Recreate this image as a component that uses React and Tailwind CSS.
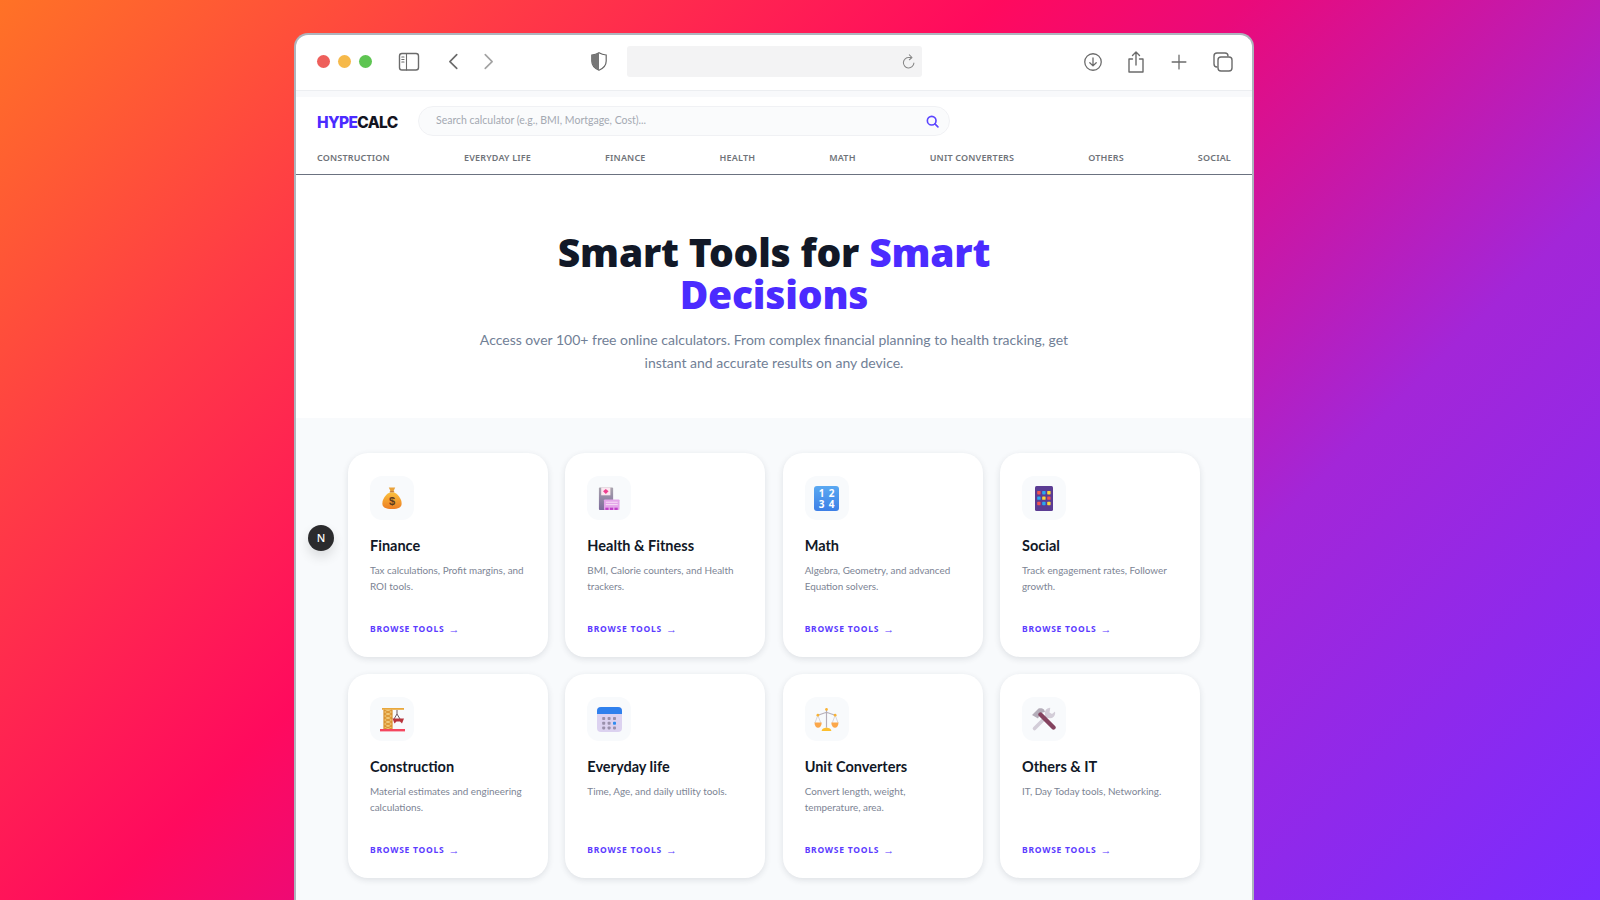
import React from "react";

const ToolIcon = ({ children, className = "" }) => (
  <svg viewBox="0 0 24 24" fill="none" stroke="#6b6b6b" strokeWidth="1.4" strokeLinecap="round" strokeLinejoin="round" className={className}>
    {children}
  </svg>
);

const Bag = () => (
  <svg viewBox="0 0 24 26" className="w-[22px] h-[26px]">
    <defs>
      <linearGradient id="bagG" x1="0" y1="0" x2="0" y2="1">
        <stop offset="0" stopColor="#fbbf3c" />
        <stop offset="1" stopColor="#ec7f25" />
      </linearGradient>
    </defs>
    <path d="M8.5 1.5 L15.5 1.5 L13.5 6 L10.5 6 Z" fill="#e9a23b" />
    <rect x="9.5" y="5.5" width="5" height="1.6" rx=".8" fill="#b9651f" />
    <path d="M9.5 7 C4 10 1.5 15 1.5 19 C1.5 23.5 5 25 12 25 C19 25 22.5 23.5 22.5 19 C22.5 15 20 10 14.5 7 Z" fill="url(#bagG)" />
    <text x="12" y="21" textAnchor="middle" fontSize="12" fontWeight="700" fill="#5c3a1e" fontFamily="Liberation Sans, sans-serif">$</text>
  </svg>
);

const Health = () => (
  <svg viewBox="0 0 24 26" className="w-[22px] h-[25px]">
    <defs>
      <linearGradient id="hG" x1="0" y1="0" x2="0" y2="1">
        <stop offset="0" stopColor="#a9a4ad" />
        <stop offset="1" stopColor="#7c6a9c" />
      </linearGradient>
    </defs>
    <rect x="1" y="1" width="15.5" height="24.5" rx="1" fill="url(#hG)" />
    <rect x="3.5" y="1" width="10" height="8.5" fill="#fbe7f0" />
    <path d="M8.5 2.5 L11.5 5.2 L8.5 8 L5.5 5.2 Z" fill="#ee3e8f" />
    <rect x="6.5" y="14" width="17" height="11.5" rx="1" fill="#e4a6ea" />
    <rect x="8.5" y="16.5" width="13" height="1.2" fill="#f5d8f5" />
    <rect x="8.5" y="19" width="13" height="1.2" fill="#f5d8f5" />
    <rect x="8" y="23" width="3.5" height="2.5" fill="#c03fc8" />
    <rect x="13" y="23" width="3.5" height="2.5" fill="#c03fc8" />
    <rect x="18" y="23" width="3.5" height="2.5" fill="#c03fc8" />
  </svg>
);

const MathIcon = () => (
  <svg viewBox="0 0 25 25" className="w-[25px] h-[25px]">
    <defs>
      <linearGradient id="mG" x1="0" y1="0" x2="0" y2="1">
        <stop offset="0" stopColor="#5aa9f2" />
        <stop offset="1" stopColor="#3d7fe6" />
      </linearGradient>
    </defs>
    <rect width="25" height="25" rx="3" fill="url(#mG)" />
    <text x="7.5" y="11" textAnchor="middle" fontSize="10" fontWeight="700" fill="#fff" fontFamily="Noto Sans, sans-serif">1</text>
    <text x="17.5" y="11" textAnchor="middle" fontSize="10" fontWeight="700" fill="#fff" fontFamily="Noto Sans, sans-serif">2</text>
    <text x="7.5" y="22" textAnchor="middle" fontSize="10" fontWeight="700" fill="#fff" fontFamily="Noto Sans, sans-serif">3</text>
    <text x="17.5" y="22" textAnchor="middle" fontSize="10" fontWeight="700" fill="#fff" fontFamily="Noto Sans, sans-serif">4</text>
  </svg>
);

const SocialIcon = () => {
  const cols = ["#ef5350", "#29a8f0", "#fdd835", "#29a8f0", "#fdd835", "#ef5350", "#ef5350", "#29a8f0", "#fdd835"];
  return (
    <svg viewBox="0 0 18 25" className="w-[18px] h-[25px]">
      <rect width="18" height="25" rx="1.5" fill="#5b3c93" />
      {cols.map((c, i) => (
        <rect key={i} x={2.2 + (i % 3) * 5} y={5 + Math.floor(i / 3) * 5.4} width="3.4" height="3.4" rx=".6" fill={c} />
      ))}
    </svg>
  );
};

const Crane = () => (
  <svg viewBox="0 0 25 25" className="w-[25px] h-[25px]">
    <rect x="2" y="1" width="22" height="1.8" fill="#e9a83c" />
    <rect x="4" y="3" width="8" height="19" fill="#f0c878" />
    <path d="M4 3 L12 7 L4 11 L12 15 L4 19 L12 22 M12 3 L4 7 L12 11 L4 15 L12 19 L4 22" stroke="#d98f2c" strokeWidth="1" fill="none" />
    <path d="M4 3 V22 M12 3 V22" stroke="#d98f2c" strokeWidth="1.2" />
    <path d="M17 3 V7 M17 7 L14 12 M17 7 L20 12" stroke="#6d5a64" strokeWidth="1" fill="none" />
    <path d="M12.5 11.5 H24 L22 16.5 L20 14.5 H16.5 L14.5 16.5 Z" fill="#b8343c" />
    <rect x="0" y="22" width="25" height="2.4" fill="#f4475f" />
  </svg>
);

const Calendar = () => {
  const dots = Array.from({ length: 9 });
  return (
    <svg viewBox="0 0 25 25" className="w-[25px] h-[25px]">
      <rect y="0" width="25" height="25" rx="4" fill="#dcd2f0" />
      <path d="M0 7 V4 a4 4 0 0 1 4 -4 H21 a4 4 0 0 1 4 4 V7 Z" fill="#2f80ed" />
      {dots.map((_, i) => (
        <rect key={i} x={5.2 + (i % 3) * 5.4} y={10 + Math.floor(i / 3) * 4.7} width="3" height="3" rx=".8" fill={i === 5 ? "#2f8cf0" : "#9a90ab"} />
      ))}
    </svg>
  );
};

const Scales = () => (
  <svg viewBox="0 0 26 25" className="w-[25px] h-[25px]">
    <path d="M13 2 V21 M4 8 L13 5 L22 8" stroke="#b5aeb8" strokeWidth="1.2" fill="none" />
    <path d="M4 8 L1 16 M4 8 L7 16 M22 8 L19 16 M22 8 L25 16" stroke="#c9c3ca" strokeWidth=".7" fill="none" />
    <circle cx="13" cy="2" r="1.4" fill="#f9b233" />
    <circle cx="4" cy="8" r="1.4" fill="#f9b233" />
    <circle cx="22" cy="8" r="1.4" fill="#f9b233" />
    <path d="M0.5 15.5 H8 C8 19 6 21 4.2 21 C2.4 21 0.5 19 0.5 15.5 Z" fill="#fba74a" />
    <path d="M18 15.5 H25.5 C25.5 19 23.6 21 21.8 21 C20 21 18 19 18 15.5 Z" fill="#fba74a" />
    <path d="M8 24.5 C8 22 10.5 21 13 21 C15.5 21 18 22 18 24.5 Z" fill="#fdbf2d" />
  </svg>
);

const Tools = () => (
  <svg viewBox="0 0 25 25" className="w-[25px] h-[25px]">
    <path d="M3.5 21.5 L17 8" stroke="#d3cdd8" strokeWidth="3.6" strokeLinecap="round" />
    <circle cx="19" cy="6" r="5.2" fill="#d3cdd8" />
    <path d="M19.5 -0.5 L18.5 5.5 L21 7 L26 3 L24 -1 Z" fill="#f8fafc" />
    <path d="M1 8 L7.5 1.5 C9.5 0.8 11.5 1.2 13 2.5 L14 5 L11.5 5.5 L8.5 8.5 L7 11.5 Z" fill="#b4adb9" />
    <path d="M9.5 7.5 L22.5 20.5" stroke="#84435f" strokeWidth="4.4" strokeLinecap="round" />
  </svg>
);

const cards = [
  { t: "Finance", d: "Tax calculations, Profit margins, and ROI tools.", i: <Bag /> },
  { t: "Health & Fitness", d: "BMI, Calorie counters, and Health trackers.", i: <Health /> },
  { t: "Math", d: "Algebra, Geometry, and advanced Equation solvers.", i: <MathIcon /> },
  { t: "Social", d: "Track engagement rates, Follower growth.", i: <SocialIcon /> },
  { t: "Construction", d: "Material estimates and engineering calculations.", i: <Crane /> },
  { t: "Everyday life", d: "Time, Age, and daily utility tools.", i: <Calendar /> },
  { t: "Unit Converters", d: "Convert length, weight, temperature, area.", i: <Scales /> },
  { t: "Others & IT", d: "IT, Day Today tools, Networking.", i: <Tools /> },
];

const nav = ["CONSTRUCTION", "EVERYDAY LIFE", "FINANCE", "HEALTH", "MATH", "UNIT CONVERTERS", "OTHERS", "SOCIAL"];

const Card = ({ t, d, i }) => (
  <div className="h-[204px] rounded-[20px] bg-white pl-[22px] pr-[22px] pt-[23px] shadow-[0_2px_6px_rgba(30,41,59,0.12)] flex flex-col">
    <div className="w-[44px] h-[44px] rounded-[12px] bg-[#f8fafc] flex items-center justify-center">{i}</div>
    <h3 className="mt-[15px] text-[14.5px] leading-[22px] font-bold text-[#111827] font-['Lato',sans-serif]">{t}</h3>
    <p className="mt-[6px] text-[9.9px] leading-[15.5px] text-[#7c8494] h-[31px] font-['Lato',sans-serif]">{d}</p>
    <div className="mt-[29px] flex items-center gap-[4px] text-[8.5px] leading-[12px] font-bold tracking-[0.09em] text-[#5b3bff]">
      <span>BROWSE TOOLS</span>
      <span className="text-[11px] tracking-normal font-normal font-['Liberation_Sans',sans-serif]">→</span>
    </div>
  </div>
);

export default function App() {
  return (
    <div className="relative h-[900px] w-[1600px] overflow-hidden pt-[33px] pl-[294px] bg-[linear-gradient(135deg,#ff7226_0%,#ff3c45_20%,#ff0a5e_40%,#ea0a7a_50%,#a326d8_72%,#7a2cff_100%)] font-['Noto_Sans',sans-serif]">
      <div className="w-[960px] h-[900px] rounded-t-[14px] border-t-[2px] border-x-[2px] border-[#aeb4bd] bg-white overflow-hidden">
        {/* Browser chrome */}
        <div className="h-[56px] flex items-center pl-[21px] pr-[16px] pb-[2px] border-b border-[#eceef1]">
          <div className="flex items-center gap-[8px]">
            <span className="w-[13px] h-[13px] rounded-full bg-[#ee5f5b]" />
            <span className="w-[13px] h-[13px] rounded-full bg-[#f6b94a]" />
            <span className="w-[13px] h-[13px] rounded-full bg-[#5ec552]" />
          </div>
          <ToolIcon className="w-[24px] h-[24px] ml-[25px]">
            <rect x="2.5" y="3.5" width="19" height="16.5" rx="2.5" />
            <path d="M9.5 3.5 V20 M4.8 7 H7 M4.8 9.5 H7 M4.8 12 H7" strokeWidth="1.1" />
          </ToolIcon>
          <ToolIcon className="w-[22px] h-[22px] ml-[22px]">
            <path d="M15 4 L7.5 11.5 L15 19" strokeWidth="1.8" />
          </ToolIcon>
          <ToolIcon className="w-[22px] h-[22px] ml-[12px]">
            <path d="M9 4 L16.5 11.5 L9 19" stroke="#a3a3a3" strokeWidth="1.8" />
          </ToolIcon>
          <svg viewBox="0 0 16 19" className="w-[16px] h-[19px] ml-[92px]">
            <path d="M8 .8 C10 2 12.5 2.8 15.2 3 V9 C15.2 13 12.5 16.3 8 18.2 C3.5 16.3 .8 13 .8 9 V3 C3.5 2.8 6 2 8 .8 Z" fill="#fff" stroke="#666" strokeWidth="1.2" />
            <path d="M8 .8 C6 2 3.5 2.8 .8 3 V9 C.8 13 3.5 16.3 8 18.2 Z" fill="#777" />
          </svg>
          <div className="ml-[20px] w-[295px] shrink-0 h-[31px] rounded-[3px] bg-[#f3f3f4] flex items-center justify-end pr-[4px]">
            <ToolIcon className="w-[18px] h-[18px]">
              <path d="M18.5 13.5 A7 7 0 1 1 12 6 H15" stroke="#888" />
              <path d="M12.5 2.5 L16 6 L12.5 9" stroke="#888" />
            </ToolIcon>
          </div>
          <ToolIcon className="w-[22px] h-[22px] shrink-0 ml-[160px]">
            <circle cx="12" cy="12" r="9" />
            <path d="M12 7.5 V16 M8.5 12.8 L12 16.2 L15.5 12.8" />
          </ToolIcon>
          <ToolIcon className="w-[24px] h-[24px] shrink-0 ml-[20px]">
            <path d="M8.5 9 H5 V22 H19 V9 H15.5 M12 15 V2 M8.5 5.5 L12 2 L15.5 5.5" />
          </ToolIcon>
          <ToolIcon className="w-[22px] h-[22px] shrink-0 ml-[20px]">
            <path d="M12 4.5 V19.5 M4.5 12 H19.5" />
          </ToolIcon>
          <ToolIcon className="w-[24px] h-[24px] shrink-0 ml-[21px]">
            <path d="M6 17 C4 17 3 16 3 14 V6 C3 4 4 3 6 3 H14 C16 3 17 4 17 6" />
            <rect x="7" y="7" width="14" height="14" rx="3" />
          </ToolIcon>
        </div>
        <div className="h-[6px] bg-[#f8f9fb]" />

        {/* Site header */}
        <header className="h-[78px] border-b border-[#6b7280] bg-white px-[21px]">
          <div className="flex items-start pt-[8px]">
            <div className="w-[101px] text-[15.5px] leading-[30px] pt-[3px] font-extrabold tracking-[-0.04em] font-['Inter',sans-serif]">
              <span className="text-[#4b2bff]">HYPE</span>
              <span className="text-[#14141f]">CALC</span>
            </div>
            <div className="w-[532px] h-[30px] mt-[1px] rounded-full border border-[#f0f1f4] bg-[#fafbfc] flex items-center justify-between pl-[17px] pr-[10px]">
              <span className="text-[10.5px] text-[#a4a9b2] font-['Lato',sans-serif]">Search calculator (e.g., BMI, Mortgage, Cost)...</span>
              <svg viewBox="0 0 24 24" fill="none" stroke="#5b45ff" strokeWidth="3" strokeLinecap="round" className="w-[13px] h-[13px]">
                <circle cx="10.5" cy="10.5" r="8" />
                <path d="M16.5 16.5 L22 22" />
              </svg>
            </div>
          </div>
          <nav className="mt-[12px] flex justify-between text-[9px] leading-[16px] font-semibold tracking-[0.02em] text-[#6f7379]">
            {nav.map((n) => (
              <span key={n}>{n}</span>
            ))}
          </nav>
        </header>

        {/* Hero */}
        <section className="h-[243px] bg-white flex flex-col items-center pt-[56px]">
          <h1 className="w-[520px] text-center text-[39px] leading-[42px] font-black tracking-[-0.005em] text-[#111827]">
            Smart Tools for <span className="text-[#4b2bff]">Smart Decisions</span>
          </h1>
          <p className="mt-[14px] w-[600px] text-center text-[14px] leading-[22.5px] text-[#718096] font-['Lato',sans-serif]">
            Access over 100+ free online calculators. From complex financial planning to health tracking, get instant and accurate results on any device.
          </p>
        </section>

        {/* Cards */}
        <section className="bg-[#f8fafc] pt-[35px] pl-[52px] h-[600px]">
          <div className="grid grid-cols-[repeat(4,200px)] gap-x-[17.33px] gap-y-[17px]">
            {cards.map((c) => (
              <Card key={c.t} {...c} />
            ))}
          </div>
        </section>
      </div>

      {/* Dev indicator floating over the page */}
      <div className="absolute left-[308px] top-[525px] w-[26px] h-[26px] rounded-full bg-[#2b2b2d] text-white text-[11px] font-medium flex items-center justify-center shadow-[0_6px_12px_rgba(0,0,0,0.12)]">
        N
      </div>
    </div>
  );
}
